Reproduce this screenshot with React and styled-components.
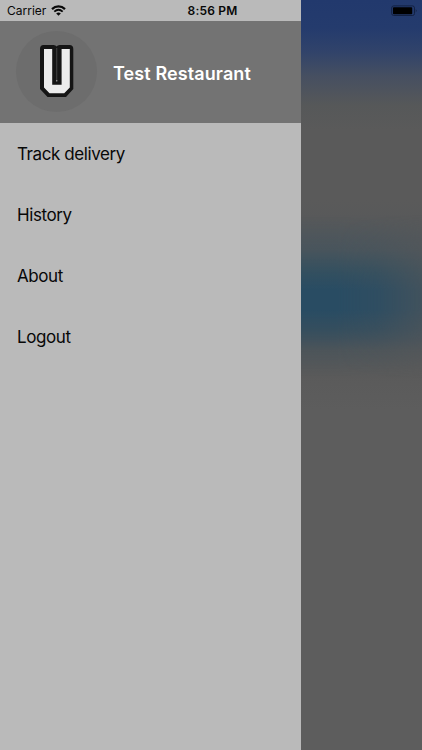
import React from 'react'
import styled, { createGlobalStyle } from 'styled-components'

const menuItems = ['Track delivery', 'History', 'About', 'Logout']

function App() {
  return (
    <Screen>
      <GlobalStyle />
      <Drawer>
        <Header>
          <Avatar>
            <Logo />
          </Avatar>
          <Title>Test Restaurant</Title>
        </Header>
        <Menu>
          {menuItems.map((item) => (
            <MenuItem key={item}>{item}</MenuItem>
          ))}
        </Menu>
      </Drawer>
      <Backdrop />
      <StatusBar>
        <Carrier>
          Carrier
          <Wifi />
        </Carrier>
        <Time>8:56 PM</Time>
        <Power>
          <Battery />
        </Power>
      </StatusBar>
    </Screen>
  )
}

function Logo() {
  return (
    <svg width="36" height="54" viewBox="0 0 36 54">
      <path
        d="M4.5 1H14.5Q16.8 1 17.6 2.6Q18.4 1 20.7 1H30.5Q34.3 1 34.3 5V45L27 53H8.5L1 45V5Q1 1 4.5 1Z"
        fill="#151515"
      />
      <path d="M5 5H13.2V40.8H22.6V5H30.8V43.5L25.2 49.2H10.5L5 43.5Z" fill="#ececec" />
      <path d="M17.7 4V37" stroke="#3c3c3c" strokeWidth="1.2" />
      <path d="M17.7 36V37.4" stroke="#999" strokeWidth="1.2" />
    </svg>
  )
}

function Wifi() {
  return (
    <svg width="15" height="11" viewBox="0 0 15 11" fill="none" stroke="#080808">
      <path d="M1 4.1C4.7 .5 10.3 .5 14 4.1" strokeWidth="2.2" />
      <path d="M3.3 6.6C5.8 4.4 9.2 4.4 11.7 6.6" strokeWidth="1.9" />
      <path d="M5.2 8.4Q7.5 6.4 9.8 8.4L7.5 10.7Z" fill="#080808" stroke="none" />
    </svg>
  )
}

function Battery() {
  return (
    <svg width="27" height="12" viewBox="0 0 27 12">
      <rect x=".7" y=".9" width="22.8" height="9.6" rx="2" fill="none" stroke="#132142" strokeWidth="1" />
      <rect x="2" y="2.2" width="19.2" height="7" rx=".8" fill="#000" />
      <path d="M24.8 4Q26.6 5.7 24.8 7.4Z" fill="#132142" />
    </svg>
  )
}

const GlobalStyle = createGlobalStyle`
  body{
    margin: 0;
  }
`

const Screen = styled.div`
  position: relative;
  display: flex;
  width: 422px;
  height: 750px;
  overflow: hidden;
  font-family: Inter, "Liberation Sans", sans-serif;
  color: #080808;
`

const Drawer = styled.div`
  width: 301px;
  box-sizing: border-box;
  padding-top: 21px;
  background: #bababa;
`

const Header = styled.div`
  display: flex;
  align-items: center;
  height: 102px;
  box-sizing: border-box;
  padding: 0 0 2px 16px;
  background: #737373;
`

const Avatar = styled.div`
  display: flex;
  align-items: center;
  justify-content: center;
  width: 81px;
  height: 81px;
  border-radius: 50%;
  background: #6d6d6d;
`

const Title = styled.h1`
  margin: 5px 0 0 16px;
  font-size: 18px;
  font-weight: 600;
  line-height: 24px;
  letter-spacing: 0.1px;
  white-space: nowrap;
  color: #fff;
`

const Menu = styled.ul`
  margin: 0;
  padding: 1px 0 0;
  list-style: none;
`

const MenuItem = styled.li`
  height: 61px;
  padding-left: 17px;
  font-size: 17px;
  line-height: 61px;
  letter-spacing: -0.42px;
`

const Backdrop = styled.div`
  flex: 1;
  background: linear-gradient(#22396d 0, #243b6d 28px, #31436a 52px, #464f61 76px, #565859 105px, #5a5a5a 130px, #5a5a5a 200px, #56585a 240px, #515659 300px, #54575a 340px, #5a5a5a 370px, #5d5d5d 410px, #5d5d5d 100%);

  /* blurred button showing through behind the drawer */
  &::after{
    content: "";
    display: block;
    height: 100%;
    background: linear-gradient(transparent 215px, rgba(60, 82, 95, 0.5) 250px, rgba(45, 78, 97, 0.85) 273px, #294c63 290px, #294c63 310px, rgba(46, 76, 95, 0.8) 330px, rgba(62, 80, 90, 0.4) 350px, transparent 378px);
    mask-image: linear-gradient(90deg, #000 35px, rgba(0, 0, 0, 0.85) 75px, rgba(0, 0, 0, 0.4) 121px);
  }
`

const StatusBar = styled.div`
  position: absolute;
  top: 0;
  left: 0;
  display: grid;
  grid-template-columns: 1fr auto 1fr;
  align-items: center;
  width: 100%;
  height: 21px;
  box-sizing: border-box;
  padding: 0 4px 0 7px;
  font-size: 12px;
`

const Carrier = styled.div`
  display: flex;
  align-items: center;
  gap: 5px;
`

const Time = styled.div`
  font-weight: 600;
  letter-spacing: 0.2px;
`

const Power = styled.div`
  display: flex;
  justify-content: flex-end;
`

export default App
